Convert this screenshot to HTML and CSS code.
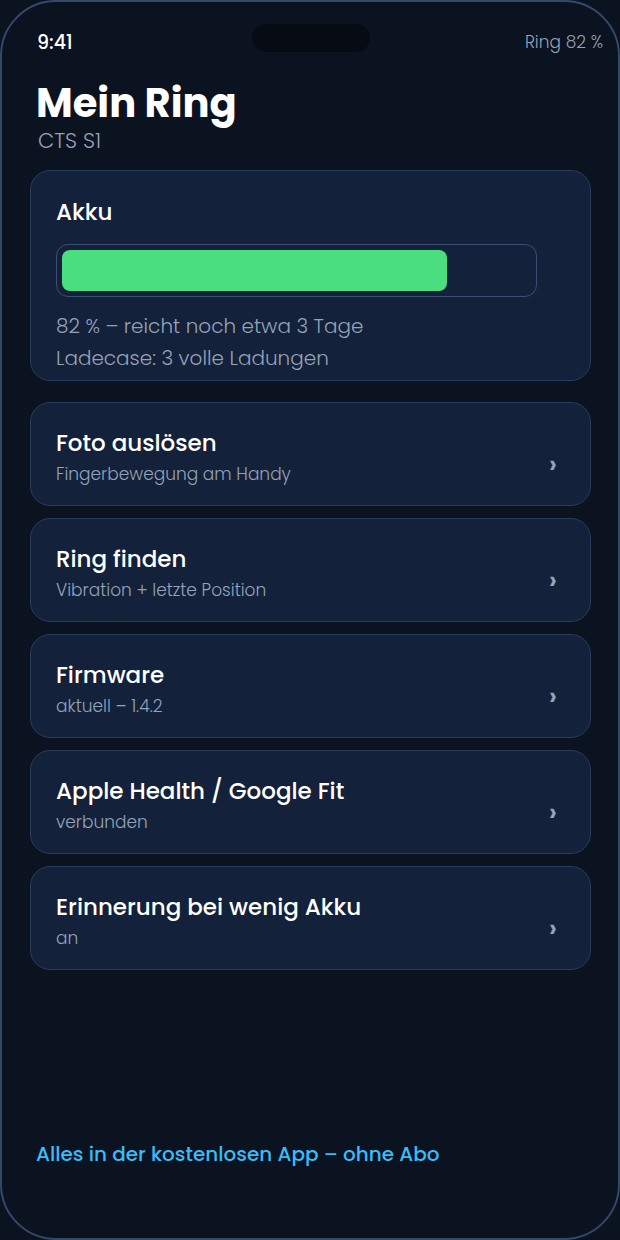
FILE: index.html
```html
<!DOCTYPE html>
<html>
<head>
  <meta charset="utf-8">
  <title>Mein Ring</title>
  <link rel="stylesheet" href="styles.css">
</head>
<body>
  <div class="phone">
    <div class="island"></div>
    <div class="status">
      <span class="time">9:41</span>
      <span class="ringState">Ring 82 %</span>
    </div>

    <div class="head">
      <h1>Mein Ring</h1>
      <div class="model">CTS S1</div>
    </div>

    <div class="card battery">
      <div class="cardTitle">Akku</div>
      <div class="bar">
        <div class="fill" style="width: 82%"></div>
      </div>
      <div class="info">82 % – reicht noch etwa 3 Tage</div>
      <div class="info">Ladecase: 3 volle Ladungen</div>
    </div>

    <div class="list">
      <div class="card row">
        <div class="rowText">
          <div class="cardTitle">Foto auslösen</div>
          <div class="sub">Fingerbewegung am Handy</div>
        </div>
        <span class="chev">›</span>
      </div>
      <div class="card row">
        <div class="rowText">
          <div class="cardTitle">Ring finden</div>
          <div class="sub">Vibration + letzte Position</div>
        </div>
        <span class="chev">›</span>
      </div>
      <div class="card row">
        <div class="rowText">
          <div class="cardTitle">Firmware</div>
          <div class="sub">aktuell – 1.4.2</div>
        </div>
        <span class="chev">›</span>
      </div>
      <div class="card row">
        <div class="rowText">
          <div class="cardTitle">Apple Health / Google Fit</div>
          <div class="sub">verbunden</div>
        </div>
        <span class="chev">›</span>
      </div>
      <div class="card row">
        <div class="rowText">
          <div class="cardTitle">Erinnerung bei wenig Akku</div>
          <div class="sub">an</div>
        </div>
        <span class="chev">›</span>
      </div>
    </div>

    <div class="foot">Alles in der kostenlosen App – ohne Abo</div>
  </div>
</body>
</html>
```

FILE: styles.css
```css
*{
  box-sizing: border-box;
}
html,body{
  margin: 0;
  background-color: #0b1220;
}
body{
  font-family: Poppins, "Liberation Sans", sans-serif;
  color: #fff;
}
.phone{
  position: relative;
  width: 620px;
  height: 1240px;
  border: 2px solid #34496a;
  border-radius: 56px;
  background-color: #0b1220;
  padding: 0 27px 0 28px;
  display: flex;
  flex-direction: column;
}
.island{
  position: absolute;
  top: 22px;
  left: 250px;
  width: 118px;
  height: 28px;
  border-radius: 14px;
  background-color: #070b13;
}
.status{
  display: flex;
  justify-content: space-between;
  align-items: center;
  padding: 26px 0 0 7px;
  height: 54px;
  margin-right: -12px;
}
.time{
  font-size: 19px;
  font-weight: 500;
}
.ringState{
  font-size: 17px;
  font-weight: 300;
  color: #94a3b8;
}
.head{
  padding: 24px 0 0 6px;
}
h1{
  margin: 0;
  font-size: 40px;
  font-weight: 700;
  line-height: 46px;
}
.model{
  margin: 3px 0 0 2px;
  font-size: 21px;
  font-weight: 300;
  color: #94a3b8;
  line-height: 24px;
}
.card{
  background-color: #13213a;
  border: 1px solid #283c5c;
  border-radius: 20px;
}
.battery{
  margin-top: 17px;
  padding: 26px 26px 6px 25px;
  height: 211px;
}
.cardTitle{
  font-size: 23px;
  font-weight: 500;
  line-height: 30px;
}
.bar{
  margin-top: 17px;
  width: 481px;
  height: 53px;
  border: 1.5px solid #3b5070;
  border-radius: 12px;
  padding: 5px;
}
.fill{
  height: 100%;
  background-color: #4ade80;
  border-radius: 8px;
}
.info{
  font-size: 20px;
  font-weight: 300;
  color: #94a3b8;
  line-height: 32px;
}
.bar + .info{
  margin-top: 13px;
}
.list{
  margin-top: 21px;
  display: flex;
  flex-direction: column;
  gap: 12px;
}
.row{
  height: 104px;
  display: flex;
  align-items: flex-start;
  justify-content: space-between;
  padding: 25px 33px 0 25px;
}
.sub{
  margin-top: 3px;
  font-size: 17px;
  font-weight: 300;
  color: #94a3b8;
  line-height: 26px;
}
.chev{
  margin-top: 21px;
  font-size: 26px;
  font-weight: 600;
  line-height: 30px;
  color: #94a3b8;
}
.foot{
  margin-top: auto;
  margin-bottom: 69px;
  padding-left: 6px;
  font-size: 20px;
  font-weight: 500;
  color: #38bdf8;
}
```
